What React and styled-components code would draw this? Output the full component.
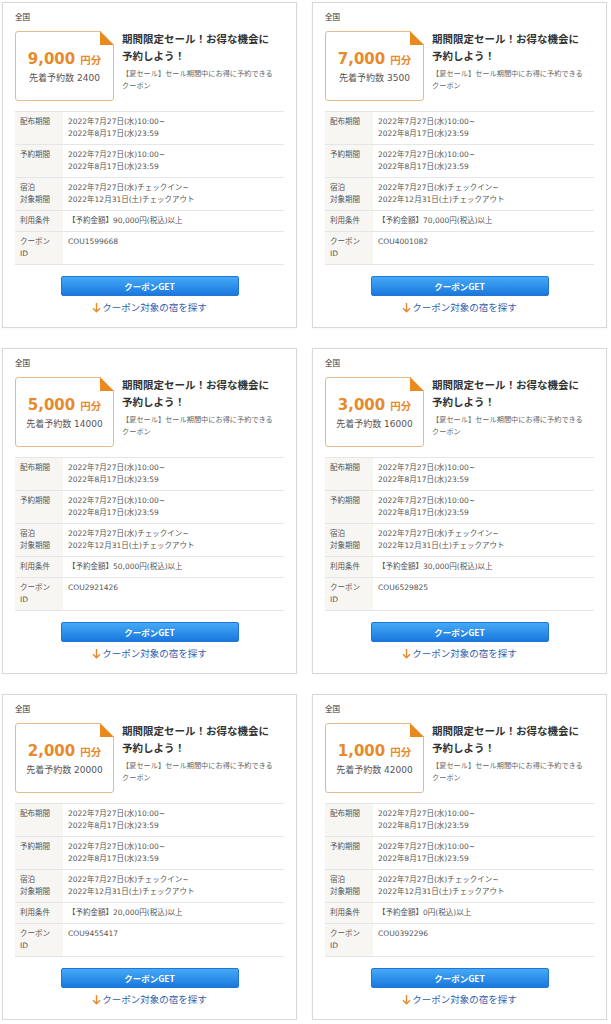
import React from 'react';
import styled, { createGlobalStyle } from 'styled-components';

const coupons = [
  { amount: '9,000', count: 2400, min: '90,000', id: 'COU1599668' },
  { amount: '7,000', count: 3500, min: '70,000', id: 'COU4001082' },
  { amount: '5,000', count: 14000, min: '50,000', id: 'COU2921426' },
  { amount: '3,000', count: 16000, min: '30,000', id: 'COU6529825' },
  { amount: '2,000', count: 20000, min: '20,000', id: 'COU9455417' },
  { amount: '1,000', count: 42000, min: '0', id: 'COU0392296' },
];

const GlobalStyle = createGlobalStyle`
  body {
    margin: 0;
    background: #fff;
    font-family: 'DejaVu Sans', 'Noto Sans CJK JP', sans-serif;
    color: #333;
  }
`;

function DownArrow() {
  return (
    <svg width='9' height='11' viewBox='0 0 9 11'>
      <path d='M4.5 1 V9.6 M1 6.2 L4.5 9.8 L8 6.2' fill='none' stroke='#e8892b' strokeWidth='1.4' />
    </svg>
  );
}

function CouponCard({ coupon }) {
  return (
    <Card>
      <Area>全国</Area>
      <Head>
        <PriceBox>
          <Fold viewBox='0 0 14 14'>
            <polygon points='0,0 14,0 14,14' fill='#fff' />
            <polygon points='0,0 0,14 14,14' fill='#e98a1e' />
          </Fold>
          <Amount>
            {coupon.amount}
            <Unit>円分</Unit>
          </Amount>
          <Count>先着予約数 {coupon.count}</Count>
        </PriceBox>
        <HeadText>
          <Title>期間限定セール！お得な機会に予約しよう！</Title>
          <Desc>【夏セール】セール期間中にお得に予約できるクーポン</Desc>
        </HeadText>
      </Head>
      <InfoTable>
        <tbody>
          <tr>
            <Label>配布期間</Label>
            <Value>
              2022年7月27日(水)10:00~
              <br />
              2022年8月17日(水)23:59
            </Value>
          </tr>
          <tr>
            <Label>予約期間</Label>
            <Value>
              2022年7月27日(水)10:00~
              <br />
              2022年8月17日(水)23:59
            </Value>
          </tr>
          <tr>
            <Label>
              宿泊
              <br />
              対象期間
            </Label>
            <Value>
              2022年7月27日(水)チェックイン~
              <br />
              2022年12月31日(土)チェックアウト
            </Value>
          </tr>
          <tr>
            <Label>利用条件</Label>
            <Value>【予約金額】{coupon.min}円(税込)以上</Value>
          </tr>
          <tr>
            <Label>
              クーポン
              <br />
              ID
            </Label>
            <Value>{coupon.id}</Value>
          </tr>
        </tbody>
      </InfoTable>
      <GetButton>クーポンGET</GetButton>
      <SearchLink>
        <DownArrow />
        クーポン対象の宿を探す
      </SearchLink>
    </Card>
  );
}

export default function App() {
  return (
    <>
      <GlobalStyle />
      <Grid>
        {coupons.map((c) => (
          <CouponCard key={c.id} coupon={c} />
        ))}
      </Grid>
    </>
  );
}

const Grid = styled.div`
  display: grid;
  grid-template-columns: 295px 295px;
  column-gap: 15px;
  row-gap: 20px;
  padding: 2px 0 0 2px;
`;

const Card = styled.div`
  box-sizing: border-box;
  display: flex;
  flex-direction: column;
  padding: 9px 12px 13px 12px;
  border: 1px solid #d9d9d9;
  box-shadow: 0 0 2px rgba(0, 0, 0, 0.06);
  background: #fff;
`;

const Area = styled.div`
  font-size: 7.5px;
  line-height: 12px;
  color: #333;
`;

const Head = styled.div`
  display: flex;
  align-items: flex-start;
  gap: 8px;
  margin-top: 7px;
`;

const PriceBox = styled.div`
  position: relative;
  box-sizing: border-box;
  flex: 0 0 99px;
  height: 70px;
  display: flex;
  flex-direction: column;
  align-items: center;
  justify-content: center;
  gap: 4px;
  border: 1px solid #e4bb88;
  border-radius: 3px;
  padding-top: 2px;
`;

const Fold = styled.svg`
  position: absolute;
  top: -1px;
  right: -1px;
  width: 14px;
  height: 14px;
`;

const Amount = styled.div`
  font-family: 'DejaVu Sans', sans-serif;
  font-weight: bold;
  font-size: 15px;
  line-height: 16px;
  color: #e8892b;
  white-space: nowrap;
`;

const Unit = styled.span`
  font-family: 'Noto Sans CJK JP', sans-serif;
  font-size: 10.5px;
  margin-left: 5px;
`;

const Count = styled.div`
  font-size: 9px;
  line-height: 12px;
  color: #555;
  white-space: nowrap;
`;

const HeadText = styled.div`
  width: 156px;
  display: flex;
  flex-direction: column;
  gap: 4px;
`;

const Title = styled.div`
  font-family: 'Noto Sans CJK JP', sans-serif;
  font-weight: bold;
  font-size: 10.5px;
  line-height: 16.5px;
  color: #333;
`;

const Desc = styled.div`
  font-family: 'Noto Sans CJK JP', sans-serif;
  font-size: 7.2px;
  line-height: 11.5px;
  color: #666;
`;

const InfoTable = styled.table`
  width: 100%;
  margin-top: 10px;
  border-collapse: collapse;
  border-top: 1px solid #e6e6e6;
  font-size: 7.5px;
  line-height: 12px;

  tr {
    border-bottom: 1px solid #e6e6e6;
  }
`;

const Label = styled.td`
  width: 38px;
  padding: 4px 5px;
  background: #f7f6f3;
  color: #555;
  vertical-align: top;
  white-space: nowrap;
`;

const Value = styled.td`
  padding: 4px 5px;
  color: #555;
  vertical-align: top;
  white-space: nowrap;
`;

const GetButton = styled.button`
  align-self: center;
  width: 178px;
  height: 20px;
  margin-top: 11px;
  border: 1px solid #1f76d8;
  border-radius: 2px;
  background: linear-gradient(#45a9f6, #1a78de);
  color: #fff;
  font-family: 'Noto Sans CJK JP', sans-serif;
  font-weight: bold;
  font-size: 8.5px;
  padding: 0;
`;

const SearchLink = styled.a`
  align-self: center;
  display: flex;
  align-items: center;
  gap: 1px;
  margin-top: 4px;
  font-family: 'Noto Sans CJK JP', sans-serif;
  font-size: 9.5px;
  line-height: 14px;
  color: #3160ad;
  cursor: pointer;
`;
